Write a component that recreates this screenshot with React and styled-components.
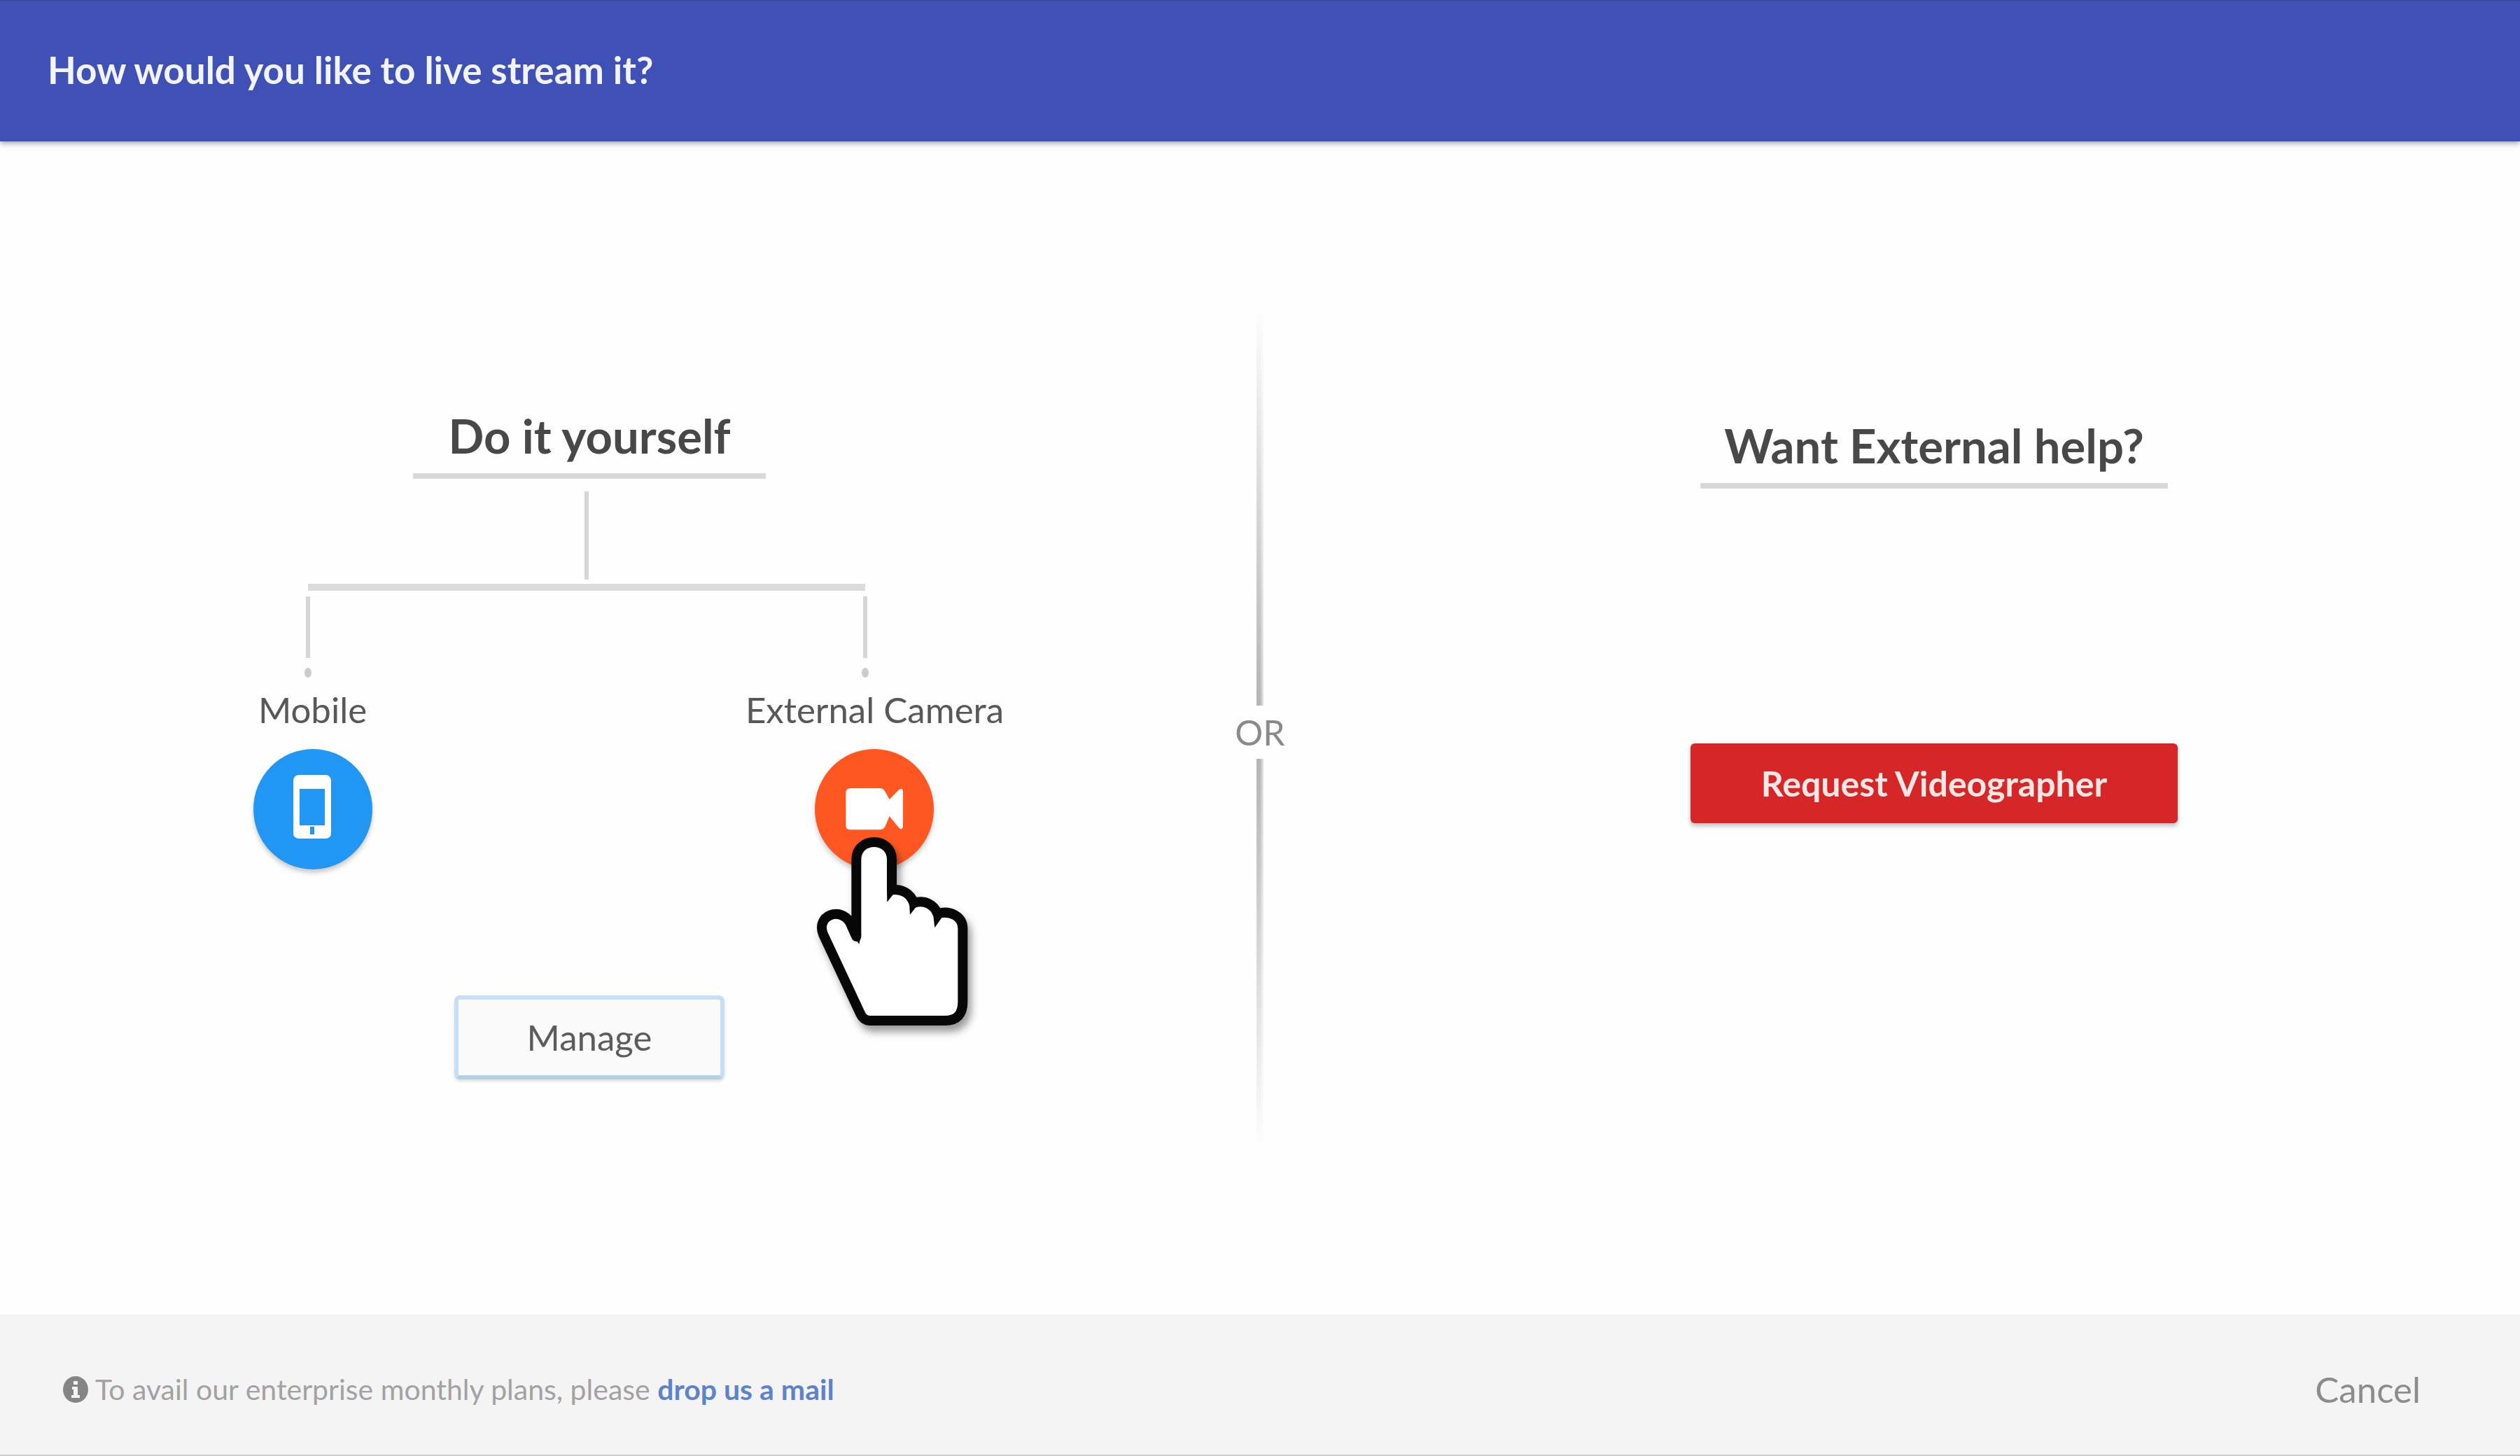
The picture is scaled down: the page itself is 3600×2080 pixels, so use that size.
import React from "react";
import styled, { createGlobalStyle } from "styled-components";

const GlobalStyle = createGlobalStyle`
  * { box-sizing: border-box; }
  body { margin: 0; font-family: Lato, "Open Sans", sans-serif; background: #fefefe; }
  button { font-family: inherit; cursor: pointer; }
`;

const Page = styled.div`
  display: flex;
  flex-direction: column;
  min-height: 100vh;
`;

const Header = styled.header`
  display: flex;
  align-items: center;
  height: 202px;
  padding: 0 68px 4px;
  background: #3f51b5;
  border-top: 2px solid #3f4a9c;
  box-shadow: 0 2px 8px rgba(40, 40, 60, 0.5);
`;

const HeaderTitle = styled.h1`
  margin: 0;
  color: #f3f4fb;
  font-size: 53px;
  line-height: 60px;
  font-weight: 700;
`;

const Main = styled.main`
  flex: 1;
  display: grid;
  grid-template-columns: 1fr 232px 1fr;
`;

const Panel = styled.section`
  display: flex;
  flex-direction: column;
  align-items: center;
  padding-top: ${(p) => (p.$low ? 394 : 380)}px;
  padding-left: ${(p) => (p.$low ? 10 : 0)}px;
`;

const PanelTitle = styled.h2`
  margin: 0;
  padding: 0 ${(p) => p.$inset}px 14px;
  border-bottom: 8px solid #d9d9d9;
  color: #484848;
  font-size: 67px;
  line-height: 80px;
  font-weight: 700;
`;

const Connector = styled.div`
  display: flex;
  flex-direction: column;
  align-items: center;
  width: 806px;
  margin: 18px 8px 0 0;
`;

const Stem = styled.div`
  width: 6px;
  height: ${(p) => p.$length}px;
  background: #d6d6d6;
`;

const Crossbar = styled.div`
  width: 796px;
  height: 10px;
  margin: 6px 0 8px;
  background: #dcdcdc;
`;

const Legs = styled.div`
  display: flex;
  justify-content: space-between;
  width: 100%;
`;

const Leg = styled.div`
  display: flex;
  flex-direction: column;
  align-items: center;
  gap: 14px;
`;

const Dot = styled.div`
  width: 10px;
  height: 14px;
  border-radius: 50%;
  background: #cccccc;
`;

const Options = styled.div`
  display: grid;
  grid-template-columns: 803px 803px;
  justify-items: center;
  margin: 16px 0 180px 12px;
`;

const Option = styled.div`
  display: flex;
  flex-direction: column;
  align-items: center;
  gap: 26px;
`;

const OptionLabel = styled.label`
  color: #585858;
  font-size: 51px;
  line-height: 60px;
`;

const RoundButton = styled.button`
  position: relative;
  width: 170px;
  height: 172px;
  padding: 0;
  border: 0;
  border-radius: 50%;
  background: ${(p) => p.$color};
  box-shadow: 0 5px 6px rgba(0, 0, 0, 0.2);
`;

const Glyph = styled.svg`
  display: block;
  width: 100%;
  height: 100%;
`;

const Pointer = styled.svg`
  position: absolute;
  left: -4px;
  top: 118px;
  width: 240px;
  height: 286px;
  overflow: visible;
  filter: drop-shadow(5px 9px 6px rgba(0, 0, 0, 0.4));
`;

const ManageButton = styled.button`
  min-width: 386px;
  height: 120px;
  padding: 0 96px;
  border: 6px solid #c5e0f6;
  border-bottom-color: #b5d1e6;
  border-radius: 8px;
  background: #fafafa;
  color: #5c5c5c;
  font-size: 51px;
  line-height: 60px;
  box-shadow: 0 3px 4px rgba(0, 0, 0, 0.12);
`;

const RequestButton = styled.button`
  height: 114px;
  min-width: 696px;
  margin-top: 364px;
  padding: 0 96px;
  border: 0;
  border-radius: 6px;
  background: #d52727;
  color: #fbe6e6;
  font-size: 50px;
  line-height: 60px;
  font-weight: 700;
  box-shadow: 0 4px 6px rgba(0, 0, 0, 0.25);
`;

const Divider = styled.div`
  display: flex;
  flex-direction: column;
  align-items: center;
  padding-top: 234px;
  color: #8a8a8a;
  font-size: 50px;
  line-height: 76px;
`;

const Rule = styled.div`
  width: 10px;
  height: ${(p) => (p.$up ? 572 : 560)}px;
  background: linear-gradient(${(p) => (p.$up ? "to top" : "to bottom")}, #b4b4b4, #d4d4d4 45%, #fefefe);
  mask-image: linear-gradient(to right, #000 50%, rgba(0, 0, 0, 0.3));
`;

const Footer = styled.footer`
  display: flex;
  align-items: center;
  justify-content: space-between;
  height: 202px;
  padding: 14px 142px 0 90px;
  background: #f4f4f4;
  border-bottom: 2px solid #cfcfcf;
`;

const Note = styled.p`
  display: flex;
  align-items: center;
  gap: 10px;
  margin: 0;
  color: #a2a2a2;
  font-size: 41px;
  line-height: 60px;
`;

const InfoIcon = styled.svg`
  width: 36px;
  height: 40px;
`;

const MailLink = styled.a`
  color: #5e83cb;
  font-weight: 700;
  text-decoration: none;
`;

const CancelButton = styled.button`
  padding: 0;
  border: 0;
  background: none;
  color: #8c8c8c;
  font-size: 51px;
  line-height: 60px;
`;

function PhoneGlyph() {
  return (
    <Glyph viewBox="0 0 170 172" aria-hidden="true">
      <path
        fill="#fff"
        fillRule="evenodd"
        d="M66 37H102Q111 37 111 46V120Q111 128 102 128H66Q57 128 57 120V46Q57 37 66 37ZM66 57V109H102V57ZM81 111V122H87V111Z"
      />
    </Glyph>
  );
}

function CameraGlyph() {
  return (
    <Glyph viewBox="192 84 510 516" aria-hidden="true">
      <path
        fill="#fff"
        d="M345 252H470Q486 252 494 268L512 300L553 258Q570 248 570 268V415Q568 434 553 422L512 372L496 410Q488 430 470 430H345Q325 430 325 410V272Q325 252 345 252Z"
      />
    </Glyph>
  );
}

function HandPointer() {
  return (
    <Pointer viewBox="180 440 720 858" aria-hidden="true">
      <path
        fill="#fff"
        stroke="#070707"
        strokeWidth="42"
        strokeLinejoin="round"
        d="M370 890V560C370 460 522 460 522 560V690C565 684 602 705 616 746C665 730 704 755 718 792C775 775 826 805 826 855V1170Q826 1250 750 1250H425Q400 1248 388 1222L228 880C196 800 300 760 342 828Z"
      />
      <path fill="#070707" d="M501 690L502 742L535 700ZM596 735L600 796L640 745ZM698 785L706 852L742 800ZM352 880L382 922L391 880Z" />
    </Pointer>
  );
}

export default function App() {
  return (
    <>
      <GlobalStyle />
      <Page>
        <Header>
          <HeaderTitle>How would you like to live stream it?</HeaderTitle>
        </Header>
        <Main>
          <Panel>
            <PanelTitle $inset={50}>Do it yourself</PanelTitle>
            <Connector>
              <Stem $length={126} />
              <Crossbar />
              <Legs>
                <Leg>
                  <Stem $length={88} />
                  <Dot />
                </Leg>
                <Leg>
                  <Stem $length={88} />
                  <Dot />
                </Leg>
              </Legs>
            </Connector>
            <Options>
              <Option>
                <OptionLabel htmlFor="mobile">Mobile</OptionLabel>
                <RoundButton id="mobile" type="button" $color="#2196f3">
                  <PhoneGlyph />
                </RoundButton>
              </Option>
              <Option>
                <OptionLabel htmlFor="camera">External Camera</OptionLabel>
                <RoundButton id="camera" type="button" $color="#ff5722">
                  <CameraGlyph />
                  <HandPointer />
                </RoundButton>
              </Option>
            </Options>
            <ManageButton type="button">Manage</ManageButton>
          </Panel>
          <Divider>
            <Rule $up />
            OR
            <Rule />
          </Divider>
          <Panel $low>
            <PanelTitle $inset={34}>Want External help?</PanelTitle>
            <RequestButton type="button">Request Videographer</RequestButton>
          </Panel>
        </Main>
        <Footer>
          <Note>
            <InfoIcon viewBox="0 0 36 40" aria-hidden="true">
              <ellipse cx="18" cy="20" rx="18" ry="19" fill="#858585" />
              <path fill="#f4f4f4" d="M15 8H21V13H15ZM13 16H21V28H24V32H12V28H15V20H13Z" />
            </InfoIcon>
            <span>
              To avail our enterprise monthly plans, please <MailLink href="mailto:hello@example.com">drop us a mail</MailLink>
            </span>
          </Note>
          <CancelButton type="button">Cancel</CancelButton>
        </Footer>
      </Page>
    </>
  );
}
